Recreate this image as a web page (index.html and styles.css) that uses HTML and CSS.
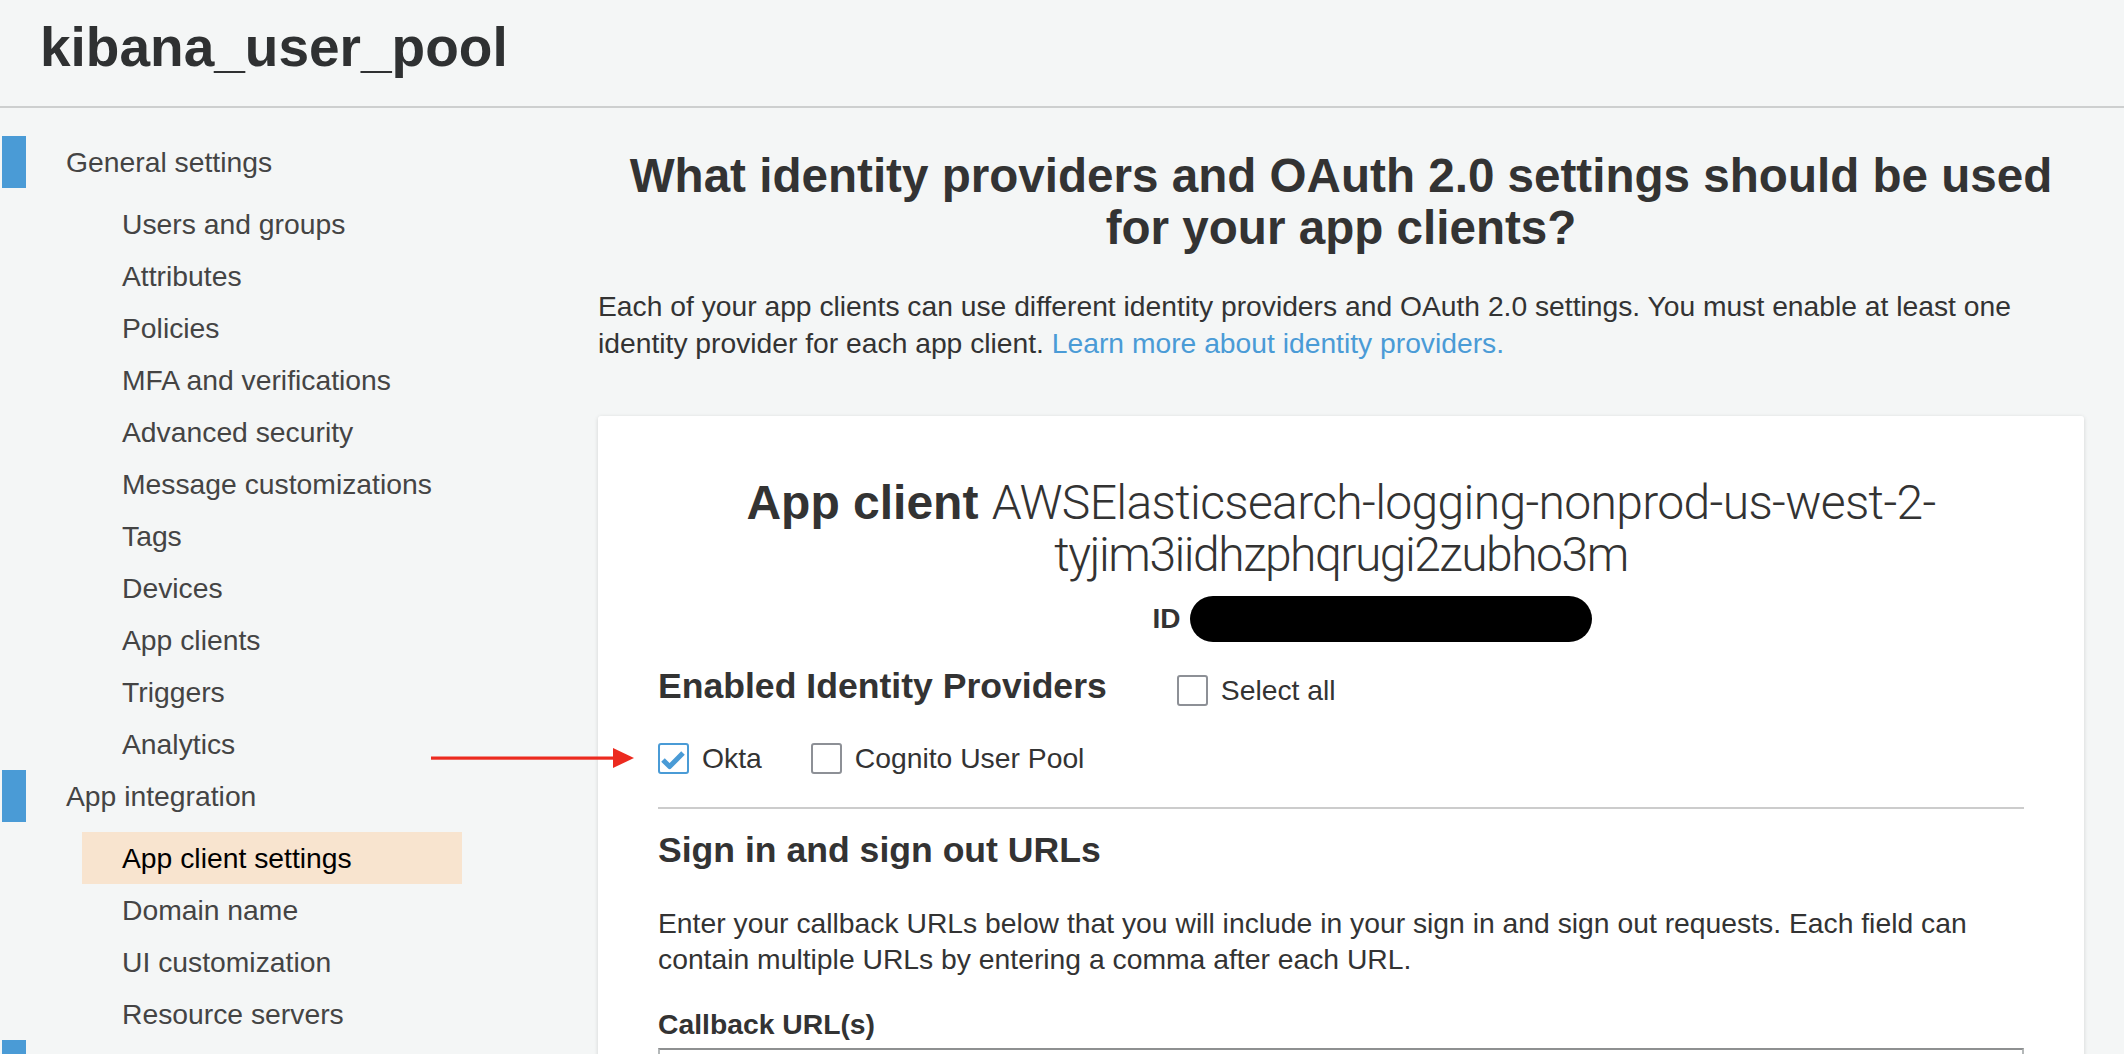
FILE: index.html
```html
<!DOCTYPE html>
<html lang="en">
<head>
<meta charset="utf-8">
<title>kibana_user_pool</title>
<link rel="stylesheet" href="styles.css">
</head>
<body>
<header class="page-header">
  <h1 class="pool-title">kibana_user_pool</h1>
</header>
<div class="layout">
  <nav class="sidebar">
    <div class="nav-group">
      <div class="nav-title">General settings</div>
      <ul class="nav-items">
        <li>Users and groups</li>
        <li>Attributes</li>
        <li>Policies</li>
        <li>MFA and verifications</li>
        <li>Advanced security</li>
        <li>Message customizations</li>
        <li>Tags</li>
        <li>Devices</li>
        <li>App clients</li>
        <li>Triggers</li>
        <li>Analytics</li>
      </ul>
    </div>
    <div class="nav-group">
      <div class="nav-title">App integration</div>
      <ul class="nav-items">
        <li class="active">App client settings</li>
        <li>Domain name</li>
        <li>UI customization</li>
        <li>Resource servers</li>
      </ul>
    </div>
    <div class="nav-group">
      <div class="nav-title">Federation</div>
      <ul class="nav-items">
        <li>Identity providers</li>
        <li>Attribute mapping</li>
      </ul>
    </div>
  </nav>
  <main class="content">
    <h2 class="page-question">What identity providers and OAuth 2.0 settings should be used<br>for your app clients?</h2>
    <p class="intro">Each of your app clients can use different identity providers and OAuth 2.0 settings. You must enable at least one identity provider for each app client. <a href="#">Learn more about identity providers.</a></p>
    <section class="card">
      <h3 class="client-name"><strong>App client</strong> <span class="client-full">AWSElasticsearch-logging-nonprod-us-west-2-<span class="client-suffix">tyjim3iidhzphqrugi2zubho3m</span></span></h3>
      <div class="client-id"><span class="id-label">ID</span><span class="redacted"></span></div>
      <div class="providers-head">
        <h4 class="section-title">Enabled Identity Providers</h4>
        <label class="check select-all"><span class="box"></span>Select all</label>
      </div>
      <div class="providers">
        <label class="check"><span class="box checked"><svg width="27" height="27" viewBox="0 0 27 27"><path d="M3 15 L9.6 21.6 L23 8" fill="none" stroke="#4a9bd6" stroke-width="5" stroke-linejoin="round"/></svg></span>Okta</label>
        <label class="check"><span class="box"></span>Cognito User Pool</label>
      </div>
      <hr class="divider">
      <h4 class="section-title signin-title">Sign in and sign out URLs</h4>
      <p class="help">Enter your callback URLs below that you will include in your sign in and sign out requests. Each field can contain multiple URLs by entering a comma after each URL.</p>
      <div class="field-label">Callback URL(s)</div>
      <div class="text-input"></div>
    </section>
  </main>
</div>
<svg class="annotation-arrow" width="203" height="20" viewBox="0 0 203 20"><rect x="0" y="8.5" width="184" height="3.2" fill="#ec2a1f"/><polygon points="182,0 203,10 182,20" fill="#ec2a1f"/></svg>
</body>
</html>
```

FILE: styles.css
```css
* { box-sizing: border-box; }
html, body { margin: 0; padding: 0; }
body {
  position: relative;
  background: #f4f6f6;
  font-family: "Liberation Sans", Arial, Helvetica, sans-serif;
  color: #333;
  overflow: hidden;
  height: 1054px;
}
.page-header {
  height: 108px;
  border-bottom: 2px solid #cdcfcf;
  padding: 20px 0 0 40px;
}
.pool-title {
  margin: 0;
  font-size: 55px;
  line-height: 55px;
  font-weight: bold;
  color: #2f3132;
}
.layout {
  display: grid;
  grid-template-columns: 598px 1fr;
}
.sidebar { padding-top: 28px; }
.nav-title {
  margin-left: 2px;
  border-left: 24px solid #4a9bd6;
  padding-left: 40px;
  font-size: 28.3px;
  line-height: 52px;
  color: #444;
}
.nav-items {
  list-style: none;
  margin: 10px 0 0 82px;
  padding: 0;
}
.nav-items li {
  width: 380px;
  padding-left: 40px;
  font-size: 28.3px;
  line-height: 52px;
  color: #444;
}
.nav-items li.active {
  background: #f8e4cf;
  color: #000;
}
.content { padding: 42px 40px 0 0; }
.page-question {
  margin: 0;
  text-align: center;
  font-size: 47.6px;
  line-height: 52px;
  font-weight: bold;
  color: #333;
}
.intro {
  margin: 34px 0 0;
  font-size: 28.25px;
  line-height: 37px;
  color: #333;
}
.intro a { color: #4a9bd6; text-decoration: none; }
.card {
  margin-top: 54px;
  background: #fff;
  border-radius: 3px;
  box-shadow: 0 1px 4px rgba(0, 0, 0, 0.14);
  padding: 61px 60px 40px;
}
.client-name {
  margin: 0;
  text-align: center;
  font-size: 48px;
  line-height: 52px;
  color: #333;
}
.client-name strong { font-weight: bold; }
.client-full {
  font-family: Roboto, "Liberation Sans", sans-serif;
  font-weight: 300;
  letter-spacing: -0.65px;
}
.client-suffix { letter-spacing: -1.5px; }
.client-id {
  display: flex;
  justify-content: center;
  align-items: center;
  gap: 9px;
  height: 46px;
  margin-top: 15px;
  padding-left: 62px;
}
.id-label { font-size: 28px; font-weight: bold; }
.redacted {
  width: 402px;
  height: 46px;
  background: #000;
  border-radius: 23px;
}
.providers-head {
  display: flex;
  align-items: flex-start;
  gap: 70px;
  margin-top: 24px;
}
.section-title {
  margin: 0;
  font-size: 35.6px;
  line-height: 40px;
  font-weight: bold;
  color: #333;
}
.select-all { margin-top: 9px; }
.check {
  display: inline-flex;
  align-items: center;
  gap: 13px;
  font-size: 28.3px;
  line-height: 31px;
  color: #333;
}
.box {
  width: 31px;
  height: 31px;
  border: 2px solid #8d9096;
  border-radius: 3px;
  background: #fff;
  display: flex;
  align-items: center;
  justify-content: center;
}
.box.checked { border-color: #4a9bd6; }
.providers {
  display: flex;
  gap: 49px;
  margin-top: 37px;
}
.divider {
  margin: 33px 0 0;
  border: 0;
  border-top: 2px solid #cccccc;
  height: 0;
}
.signin-title { margin-top: 21px; }
.help {
  margin: 35px 0 0;
  font-size: 28.3px;
  line-height: 36px;
}
.field-label {
  margin-top: 29px;
  font-size: 28.3px;
  line-height: 36px;
  font-weight: bold;
}
.text-input {
  margin-top: 6px;
  height: 64px;
  border: 2px solid #b4b8b9;
  border-top-color: #8e9091;
}
.annotation-arrow {
  position: absolute;
  left: 431px;
  top: 748px;
}
```
